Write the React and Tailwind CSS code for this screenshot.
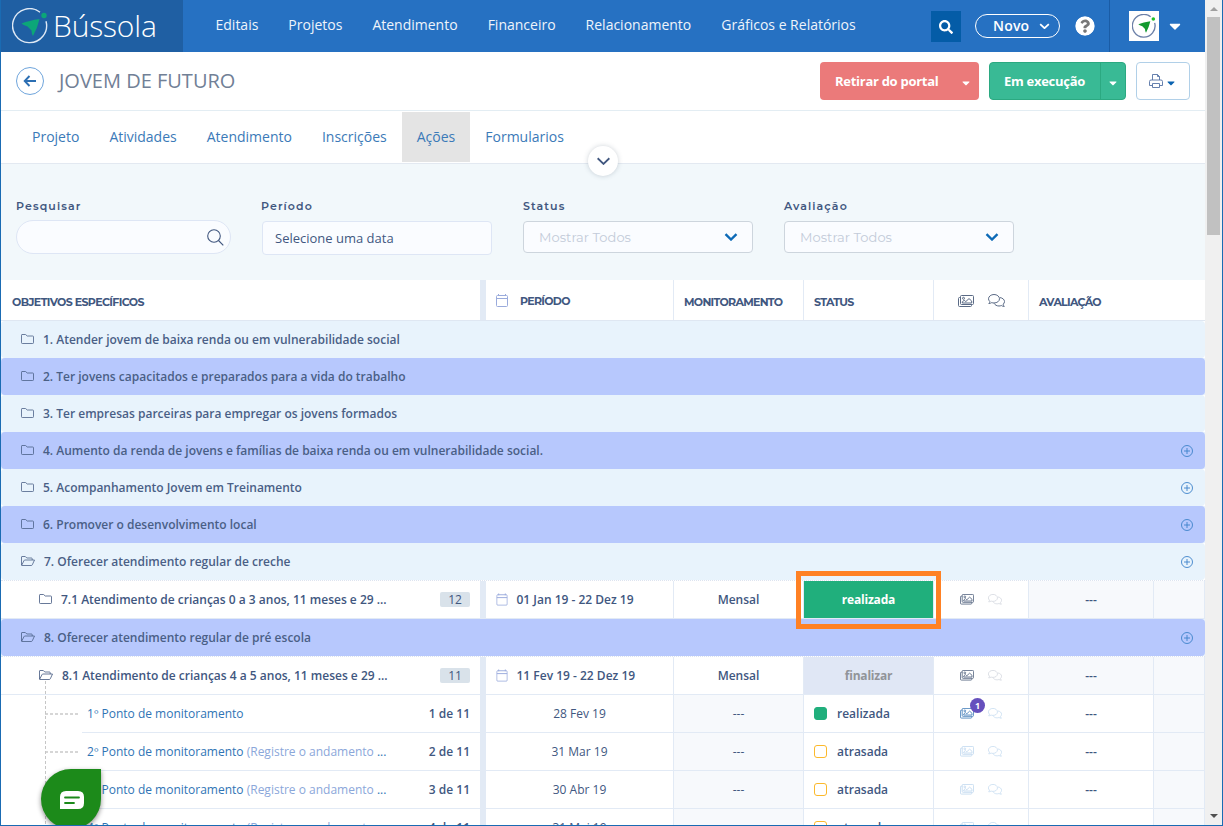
import { FaSearch, FaQuestionCircle, FaCaretDown } from 'react-icons/fa'
import clsx from 'clsx'

const NAV = ['Editais', 'Projetos', 'Atendimento', 'Financeiro', 'Relacionamento', 'Gráficos e Relatórios']
const TABS = ['Projeto', 'Atividades', 'Atendimento', 'Inscrições', 'Ações', 'Formularios']

const ROWS = [
  { type: 'goal', label: '1. Atender jovem de baixa renda ou em vulnerabilidade social' },
  { type: 'goal', label: '2. Ter jovens capacitados e preparados para a vida do trabalho', dark: true },
  { type: 'goal', label: '3. Ter empresas parceiras para empregar os jovens formados' },
  { type: 'goal', label: '4. Aumento da renda de jovens e famílias de baixa renda ou em vulnerabilidade social.', dark: true, add: true },
  { type: 'goal', label: '5. Acompanhamento Jovem em Treinamento', add: true },
  { type: 'goal', label: '6. Promover o desenvolvimento local', dark: true, add: true },
  { type: 'goal', label: '7. Oferecer atendimento regular de creche', open: true, add: true },
  { type: 'action', label: '7.1 Atendimento de crianças 0 a 3 anos, 11 meses e 29 ...', count: 12, period: '01 Jan 19 - 22 Dez 19', status: 'realizada' },
  { type: 'goal', label: '8. Oferecer atendimento regular de pré escola', dark: true, open: true, add: true },
  { type: 'action', label: '8.1 Atendimento de crianças 4 a 5 anos, 11 meses e 29 ...', count: 11, period: '11 Fev 19 - 22 Dez 19', status: 'finalizar', open: true },
  { type: 'point', n: 1, date: '28 Fev 19', done: true },
  { type: 'point', n: 2, date: '31 Mar 19' },
  { type: 'point', n: 3, date: '30 Abr 19' },
  { type: 'point', n: 4, date: '31 Mai 19' },
]

function FolderIcon({ open }) {
  if (open) {
    return (
      <svg width="14" height="10" viewBox="0 0 14 10" fill="none" stroke="currentColor" strokeWidth="0.8" strokeLinejoin="round" className="shrink-0 -mt-px">
        <path d="M.5 9V1Q.5.5 1 .5H4.3L5.8 2H10.5Q11.2 2 11.2 2.7V4M.7 9.2 3 4.6Q3.3 4 4 4H13.5L11.3 8.8Q11 9.5 10.3 9.5H1Q.5 9.5.5 9" />
      </svg>
    )
  }
  return (
    <svg width="13" height="10" viewBox="0 0 13 10" fill="none" stroke="currentColor" strokeWidth="0.8" strokeLinejoin="round" className="shrink-0 -mt-px">
      <path d="M1 .5H4.6L6.2 2H11.7Q12.5 2 12.5 2.7V8.7Q12.5 9.5 11.7 9.5H1.3Q.5 9.5.5 8.7V1.2Q.5.5 1 .5Z" />
    </svg>
  )
}

function CalendarIcon({ className }) {
  return (
    <svg width="12" height="13" viewBox="0 0 12 13" fill="none" stroke="#9aabdc" className={clsx('shrink-0', className)}>
      <rect x=".5" y="1.5" width="11" height="11" rx="1" />
      <path d="M.5 4.5H11.5M2.5 0V2M9.5 0V2" />
    </svg>
  )
}

function ImagesIcon({ size = 14 }) {
  return (
    <svg width={size} height={(size * 12) / 16} viewBox="0 0 16 12" fill="none" stroke="currentColor" strokeLinejoin="round">
      <rect x="2.5" y=".5" width="13" height="9" rx="1" />
      <path d="M2.5 2.5H1.5Q.5 2.5.5 3.5V10.5Q.5 11.5 1.5 11.5H12.5Q13.5 11.5 13.5 10.5V9.5" />
      <circle cx="5.5" cy="3.3" r="1" />
      <path d="M4.3 8V6.8L6.2 5.3 7.8 6.6 11 3.6 13.7 6V8Z" />
    </svg>
  )
}

function CommentsIcon({ size = 14 }) {
  return (
    <svg width={size} height={(size * 13) / 17} viewBox="0 0 17 13" fill="none" stroke="currentColor" strokeLinejoin="round">
      <path d="M.8 9.5Q1.8 8.7 1.8 7.4C.9 6.6.5 5.8.5 4.8.5 2.4 3 .5 6 .5S11.5 2.4 11.5 4.8 9 9 6 9Q4.8 9 3.8 8.6 2.3 9.5.8 9.5Z" />
      <path d="M12 3.6C14.5 3.9 16.5 5.5 16.5 7.6 16.5 8.6 16 9.5 15.2 10.2Q15.3 11.5 16.3 12.4 14.5 12.4 13.3 11.5 12.3 12 11 12C8.7 12 6.9 10.9 6.1 9.3" />
    </svg>
  )
}

function PlusIcon() {
  return (
    <svg width="12" height="12" viewBox="0 0 12 12" fill="none" stroke="#3d82c9" strokeWidth="0.9">
      <circle cx="6" cy="6" r="5.5" />
      <path d="M6 3V9M3 6H9" />
    </svg>
  )
}

function Compass({ size, ring, arrow, dot, width = 1.4 }) {
  return (
    <svg width={size} height={size} viewBox="0 0 36 36" fill="none">
      <path d="M28 4.2A17 17 0 1 0 34 13.2" stroke={ring} strokeWidth={width} />
      <path d="M27.5 11Q17 12.5 9.5 15.5 11 17 15.5 18.5L19.5 22.5Q19.5 26 21 28 25.5 20 27.5 11Z" fill={arrow} />
      <circle cx="32" cy="7.5" r="2.7" fill={dot} />
    </svg>
  )
}

function Chevron({ width = 14, height = 8, stroke = 2.4, className }) {
  return (
    <svg width={width} height={height} viewBox="0 0 14 8" fill="none" stroke="currentColor" strokeWidth={stroke} className={className}>
      <path d="M1.5 1.2 7 6.5 12.5 1.2" />
    </svg>
  )
}

function Header() {
  return (
    <header className="flex h-[52px] bg-[#2671c2] text-white">
      <div className="flex w-[182px] items-center bg-[#1f5fa3] pl-[11px]">
        <Compass size={36} ring="#dfe9f5" arrow="#0ca678" dot="#0ca678" />
        <span className="ml-[5px] text-[30px] leading-none font-light tracking-[-0.15px]">Bússola</span>
      </div>
      <nav className="ml-[17.5px] flex h-[50px] items-center text-sm text-[#eef4fb]">
        {NAV.map((item) => (
          <a key={item} className="px-[15px] whitespace-nowrap">{item}</a>
        ))}
      </nav>
      <div className="ml-auto flex items-center">
        <button className="mt-px flex h-[31px] w-[30px] items-center justify-center bg-[#045ca7]">
          <FaSearch size={14} />
        </button>
        <button className="ml-[14px] flex h-6 w-[85px] items-center rounded-full border border-white pl-[17px] text-sm font-semibold tracking-[0.2px]">
          Novo
          <Chevron width={11} height={6.5} stroke={2.2} className="ml-[10px]" />
        </button>
        <FaQuestionCircle size={20} className="ml-[15px] rounded-full bg-[radial-gradient(#777_8px,transparent_8px)]" />
        <div className="ml-[14px] flex h-full items-center border-l border-[#1a5ca6] pl-[19px]">
          <span className="flex h-[30px] w-[30px] items-center justify-center bg-white">
            <Compass size={24} ring="#6c80a8" arrow="#12992f" dot="#1fc02a" width={2} />
          </span>
          <FaCaretDown size={18} className="mr-[21px] ml-[7px]" />
        </div>
      </div>
    </header>
  )
}

function TitleBar() {
  return (
    <div className="flex h-[59px] items-center border-b border-[#e3edf3] pl-[15px]">
      <span className="flex h-7 w-7 items-center justify-center rounded-full border border-[#6fa5dc] text-[#2c6fb3]">
        <svg width="14" height="12" viewBox="0 0 14 12" fill="none" stroke="currentColor" strokeWidth="1.9">
          <path d="M6.5 1 1.7 6 6.5 11M1.7 6H13" />
        </svg>
      </span>
      <h1 className="ml-[15px] text-[20px] font-normal text-[#718096]">JOVEM DE FUTURO</h1>
      <div className="mr-[15px] ml-auto flex gap-[10px] text-[13px] font-bold tracking-[-0.28px] text-white">
        <button className="flex h-[38px] w-[159px] items-center rounded bg-[#eb7a7a] pt-px pl-[15px]">
          Retirar do portal
          <FaCaretDown size={12} className="mt-0.5 ml-auto mr-[7px]" />
        </button>
        <button className="flex h-[38px] w-[137px] items-center rounded border border-[#2ba981] bg-[#39ba95] pl-[14px]">
          <span className="pt-px">Em execução</span>
          <span className="ml-auto flex h-full w-[25px] items-center justify-center border-l border-[#2ba981]">
            <FaCaretDown size={12} className="mt-[3px]" />
          </span>
        </button>
        <button className="flex h-[38px] w-[54px] items-center justify-center gap-0.5 rounded border border-[#b1d0e8] bg-white text-[#5573a5]">
          <svg width="14" height="14" viewBox="0 0 14 14" fill="none" stroke="currentColor" strokeWidth="0.9">
            <path d="M3.5 6V.5H8.5L10.5 2.5V6M8.5.5V2.5H10.5M3.5 11.5H.5V7.5Q.5 6 2 6H12Q13.5 6 13.5 7.5V11.5H10.5M3.5 9.5H10.5V13.5H3.5Z" />
          </svg>
          <FaCaretDown size={12} className="mt-[3px] text-[#0a63b0]" />
        </button>
      </div>
    </div>
  )
}

function Tabs() {
  return (
    <div className="relative flex h-[53px] border-b border-[#e3e9f1] pl-4">
      {TABS.map((tab) => (
        <a
          key={tab}
          className={clsx('mt-px flex h-[50px] items-center px-[15px] text-sm text-[#3b7ab8]', tab === 'Ações' && 'bg-[#e4e4e4]')}
        >
          {tab}
        </a>
      ))}
      <span className="absolute top-[35px] left-[587px] z-10 flex h-[30px] w-[30px] items-center justify-center rounded-full bg-white text-[#41577f] shadow-[0_0_5px_rgba(60,80,100,0.25)]">
        <Chevron width={15} height={8.5} stroke={1.7} />
      </span>
    </div>
  )
}

function FieldLabel({ children }) {
  return (
    <div className="h-[14px] font-['Montserrat','Inter',sans-serif] text-[11px] leading-[14px] font-semibold tracking-[1.1px] text-[#41577f]">
      {children}
    </div>
  )
}

function SelectField({ label }) {
  return (
    <div className="w-[230px]">
      <FieldLabel>{label}</FieldLabel>
      <div className="mt-2 flex h-8 items-center rounded border border-[#cdd5dd] bg-[#fafcff] pr-[14px] pl-[15px] font-['Montserrat','Inter',sans-serif] text-[13px] text-[#c3cbd9]">
        <span className="pt-px tracking-[0.05px]">Mostrar Todos</span>
        <Chevron width={14} height={8} className="ml-auto -mt-px text-[#0d6ab7]" />
      </div>
    </div>
  )
}

function Filters() {
  return (
    <div className="flex h-[116px] bg-[#f2f8fb] pt-[35px] pl-[15px]">
      <div className="w-[215px]">
        <FieldLabel>Pesquisar</FieldLabel>
        <div className="mt-[7px] flex h-[34px] items-center justify-end rounded-full border border-[#dee6f5] bg-[#fafcff] pr-1.5 text-[#41577f]">
          <svg width="17" height="17" viewBox="0 0 17 17" fill="none" stroke="currentColor" strokeWidth="1.1">
            <circle cx="7" cy="7" r="6.3" />
            <path d="M11.5 11.5 16.3 16.3" />
          </svg>
        </div>
      </div>
      <div className="ml-[30px] w-[231px]">
        <FieldLabel>Período</FieldLabel>
        <div className="mt-2 ml-px flex h-[34px] items-center rounded border border-[#dee6f5] bg-[#fafcff] pt-px pl-3 text-[13px] text-[#41577f]">
          Selecione uma data
        </div>
      </div>
      <div className="ml-[31px]">
        <SelectField label="Status" />
      </div>
      <div className="ml-[31px]">
        <SelectField label="Avaliação" />
      </div>
    </div>
  )
}

const CELL = 'flex shrink-0 items-center border-r border-[#e2eaf5]'

function TableHead() {
  return (
    <div className="flex h-[41px] border-b border-[#dfe7f2] bg-white pt-px font-['Montserrat','Inter',sans-serif] text-[11px] font-bold tracking-[-0.7px] text-[#41577f]">
      <div className="-mt-px flex w-[485px] shrink-0 items-center border-r-[6px] border-[#e2eaf5] pt-1 pl-[11px] tracking-[-0.6px]">OBJETIVOS ESPECÍFICOS</div>
      <div className={clsx(CELL, '-mt-px w-[188px] pt-px pl-[10px]')}>
        <CalendarIcon />
        <span className="ml-3 pt-px">PERÍODO</span>
      </div>
      <div className={clsx(CELL, '-mt-px w-[130px] pt-1 pl-[10px]')}>MONITORAMENTO</div>
      <div className={clsx(CELL, '-mt-px w-[130px] pt-1 pl-[10px]')}>STATUS</div>
      <div className={clsx(CELL, '-mt-px w-[95px] gap-[14px] pt-px pl-6 text-[#5a6a85]')}>
        <ImagesIcon size={16} />
        <CommentsIcon size={17} />
      </div>
      <div className="flex items-center pt-[3px] pl-[10px]">AVALIAÇÃO</div>
    </div>
  )
}

function GoalRow({ label, dark, open, add }) {
  return (
    <div className={clsx(dark ? 'bg-[#e8f3fc]' : 'bg-white')}>
      <div
        className={clsx(
          'flex h-[37px] items-center rounded-[4px] pr-3 pl-5 text-xs font-semibold text-[#4a5f86]',
          dark ? 'bg-[#b7c8fd]' : 'bg-[#e8f3fc]'
        )}
      >
        <FolderIcon open={open} />
        <span className="ml-[9px]">{label}</span>
        {add && (
          <span className="ml-auto">
            <PlusIcon />
          </span>
        )}
      </div>
    </div>
  )
}

function ActionRow({ label, count, period, status, open }) {
  return (
    <div className="flex h-[39px] border-t border-b border-t-[#dde4f0] border-b-[#e2eaf5] bg-white text-xs font-semibold text-[#41577f] [border-top-style:dotted]">
      <div className="flex w-[485px] shrink-0 items-center border-r-[6px] border-[#e2eaf5] pr-[10px] pl-[38px]">
        <FolderIcon open={open} />
        <span className="ml-[9px]">{label}</span>
        <span className="ml-auto flex h-[15px] w-[30px] items-center justify-center rounded-[2px] bg-[#d9e2ea] font-medium">{count}</span>
      </div>
      <div className={clsx(CELL, 'w-[188px] pl-[10px]')}>
        <CalendarIcon className="scale-95" />
        <span className="ml-[8.5px]">{period}</span>
      </div>
      <div className={clsx(CELL, 'w-[130px] justify-center')}>Mensal</div>
      {status === 'realizada' ? (
        <div className={clsx(CELL, 'relative w-[130px] justify-center bg-[#20af7c] font-bold tracking-[-0.2px] text-white')}>
          realizada
          <span className="absolute -top-[10px] -right-2 -bottom-[11px] -left-2 z-10 border-5 border-[#ff8124]" />
        </div>
      ) : (
        <div className={clsx(CELL, 'w-[130px] justify-center bg-[#e0e7f5] font-bold tracking-[-0.2px] text-[#919499]')}>{status}</div>
      )}
      <IconCell images="text-[#5a6a85]" comments="text-[#d5d9e0]" />
      <div className={clsx(CELL, 'w-[125px] justify-center bg-[#f7f9fc]')}>---</div>
      <div className={clsx(CELL, 'w-[51px] bg-[#f7f9fc]')} />
    </div>
  )
}

function IconCell({ images, comments, badge }) {
  return (
    <div className={clsx(CELL, 'w-[95px] gap-[14px] pl-[26px]')}>
      <span className={clsx('relative', images)}>
        <ImagesIcon />
        {badge && (
          <span className="absolute -top-[10px] left-[10px] flex h-[15px] w-[15px] items-center justify-center rounded-full bg-[#6650bd] text-[9px] font-bold text-white">
            {badge}
          </span>
        )}
      </span>
      <span className={comments}>
        <CommentsIcon />
      </span>
    </div>
  )
}

function PointRow({ n, date, done }) {
  return (
    <div className="flex h-[38px] bg-white text-xs text-[#41577f]">
      <div className="flex w-[485px] shrink-0 border-r-[6px] border-[#e2eaf5]">
        <div className="flex w-[81px] items-center border-b border-transparent pl-11">
          <span className="h-[2px] w-[33px] bg-[repeating-linear-gradient(90deg,#d6d6d6_0_3px,transparent_3px_5px)]" />
        </div>
        <div className="flex flex-1 items-center border-b border-[#e2eaf5] pr-[10px] pl-[5px]">
          <span className="text-[#2f74b5]">
            {n}º Ponto de monitoramento {!done && <span className="text-[#8ba7da]">(Registre o andamento </span>}
            {!done && '...'}
          </span>
          <span className="ml-auto font-semibold">{n} de 11</span>
        </div>
      </div>
      <div className={clsx(CELL, 'w-[188px] justify-center border-b')}>{date}</div>
      <div className={clsx(CELL, 'w-[130px] justify-center border-b bg-[#f7f9fc]')}>---</div>
      <div className={clsx(CELL, 'w-[130px] border-b pl-[10px] font-semibold')}>
        <span className={clsx('h-[13px] w-[13px] rounded-[3px] border', done ? 'border-[#20af7c] bg-[#20af7c]' : 'border-[#fcb92c]')} />
        <span className="ml-[10px]">{done ? 'realizada' : 'atrasada'}</span>
      </div>
      <div className="flex border-b border-[#e2eaf5]">
        <IconCell images={done ? 'text-[#4c83bb]' : 'text-[#c3daf0]'} comments="text-[#c9def2]" badge={done && 1} />
      </div>
      <div className={clsx(CELL, 'w-[125px] justify-center border-b font-semibold')}>---</div>
      <div className={clsx(CELL, 'w-[51px] border-b bg-[#f7f9fc]')} />
    </div>
  )
}

function ScrollBar() {
  return (
    <div className="flex w-[17px] shrink-0 flex-col items-center bg-[#f0f0f0]">
      <span className="mt-[7px] border-x-4 border-b-4 border-x-transparent border-b-[#a0a0a0]" />
      <span className="mt-[6px] h-[218px] w-[13px] bg-[#c1c1c1]" />
      <span className="mt-auto mb-[7px] border-x-4 border-t-4 border-x-transparent border-t-[#505050]" />
    </div>
  )
}

function ChatButton() {
  return (
    <button className="absolute top-[769px] left-10 z-20 flex h-[60px] w-[60px] items-center justify-center rounded-full rounded-tr-[8px] bg-[#1c8a1a] shadow-[0_2px_5px_rgba(0,0,0,0.45)]">
      <svg width="24" height="18" viewBox="0 0 24 18" className="mt-0.5 ml-px">
        <path d="M6 0H18Q24 0 24 6V12Q24 18 18 18H0V6Q0 0 6 0Z" fill="#fff" />
        <path d="M5 6.5H19M5 12H14" stroke="#1c8a1a" strokeWidth="1.8" strokeLinecap="round" />
      </svg>
    </button>
  )
}

export default function App() {
  return (
    <div className="relative flex h-[826px] w-[1223px] overflow-hidden border-r border-b border-l border-[#1a6bb3] bg-white font-['Open_Sans','Noto_Sans',sans-serif]">
      <div className="w-[1204px] shrink-0">
        <Header />
        <TitleBar />
        <Tabs />
        <Filters />
        <TableHead />
        <div className="relative">
          {ROWS.map((row) => {
            if (row.type === 'goal') return <GoalRow key={row.label} {...row} />
            if (row.type === 'action') return <ActionRow key={row.label} {...row} />
            return <PointRow key={row.n} {...row} />
          })}
          <span className="absolute top-[360px] bottom-0 left-11 w-px bg-[repeating-linear-gradient(180deg,#c6c6c6_0_3px,transparent_3px_5px)]" />
        </div>
      </div>
      <ScrollBar />
      <ChatButton />
    </div>
  )
}
